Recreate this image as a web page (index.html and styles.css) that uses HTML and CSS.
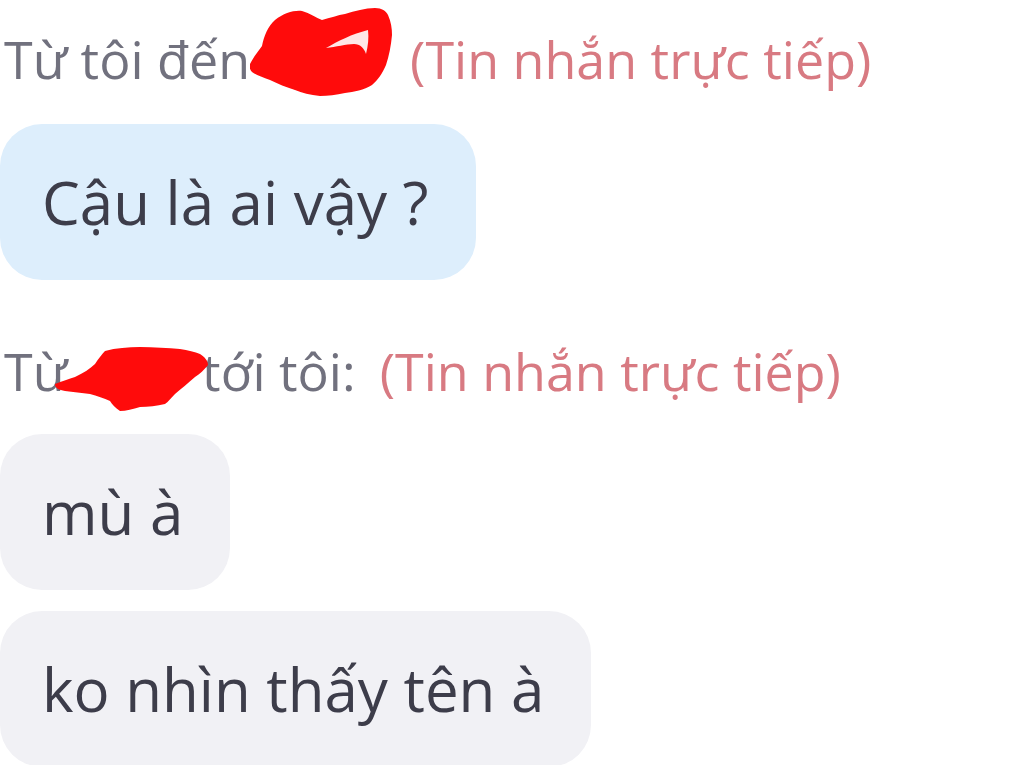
FILE: index.html
```html
<!DOCTYPE html>
<html lang="vi">
<head>
    <meta charset="UTF-8">
    <meta name="viewport" content="width=device-width, initial-scale=1.0">
    <title>Chat</title>
    <link rel="stylesheet" href="styles.css">
</head>
<body>
    <div class="chat">
        <div class="meta">
            <span class="from">Từ tôi đến</span>
            <span class="redact redact-one">
                <svg viewBox="0 0 144 90" width="144" height="90">
                    <path d="M0 56 C4 48 8 44 12 38 C14 28 18 18 25 12 C34 5 44 2 52 3 C60 5 66 10 72 12 C80 10 88 7 95 6 C105 3 115 0 125 0 C132 0 136 3 138 7 C141 14 142 20 142 27 C141 38 139 48 136 57 C132 66 128 72 122 77 C114 82 104 84 95 85 C86 87 78 88 70 88 C60 87 52 85 45 82 C36 79 28 76 20 72 C12 69 6 67 2 64 C0 62 -1 59 0 56 Z" fill="#ff0b0b"/>
                    <path d="M76 40 C88 33 102 26 118 22 C119 30 118 38 116 46 C114 40 110 36 104 36 C96 36 86 39 76 40 Z" fill="#ffffff" opacity="0.9"/>
                </svg>
            </span>
            <span class="dm">(Tin nhắn trực tiếp)</span>
        </div>
        <div class="bubble mine">Cậu là ai vậy ?</div>

        <div class="meta">
            <span class="from">Từ</span>
            <span class="redact redact-two">
                <svg viewBox="0 0 156 68" width="156" height="68">
                    <path d="M1 39 C8 36 15 34 21 32 C29 28 36 24 41 19 C45 13 48 9 51 6 C62 3 74 2 86 2 C100 2 114 3 126 4 C134 5 141 7 146 9 C151 12 154 16 154 20 C150 25 146 29 141 32 C134 38 127 44 121 49 C117 53 114 57 111 59 C103 61 94 62 86 62 C79 64 72 66 66 66 C61 63 58 59 56 56 C50 53 43 51 36 49 C28 48 19 47 11 46 C5 45 1 43 1 39 Z" fill="#ff0b0b"/>
                </svg>
            </span>
            <span class="from">tới tôi:</span>
            <span class="dm dm-spaced">(Tin nhắn trực tiếp)</span>
        </div>
        <div class="bubble">mù à</div>
        <div class="bubble">ko nhìn thấy tên à</div>
    </div>
</body>
</html>
```

FILE: styles.css
```css
* {
    margin: 0;
    padding: 0;
    box-sizing: border-box;
}

body {
    font-family: 'Open Sans', 'Noto Sans', 'DejaVu Sans', sans-serif;
    background: #ffffff;
    color: #3d3d4a;
    overflow: hidden;
}

.chat {
    display: flex;
    flex-direction: column;
    align-items: flex-start;
    padding-top: 27px;
}

.meta {
    display: flex;
    align-items: center;
    font-size: 52px;
    line-height: 64px;
    color: #71717e;
    padding-left: 4px;
    white-space: nowrap;
}

.meta .dm {
    color: #d87a82;
    margin-left: 16px;
}

.meta .dm-spaced {
    margin-left: 24px;
}

.redact {
    position: relative;
    display: inline-block;
    height: 64px;
}

.redact svg {
    position: absolute;
}

.redact-one {
    width: 144px;
}

.redact-one svg {
    left: 0;
    top: -19px;
}

.redact-two {
    width: 135px;
}

.redact-two svg {
    left: -13px;
    top: 6px;
}

.bubble {
    background: #f1f1f5;
    border-radius: 42px;
    font-size: 60px;
    line-height: 60px;
    padding: 48px 47px 48px 42px;
    margin-bottom: 21px;
    color: #3d3d4a;
}

.bubble.mine {
    background: #ddeefc;
    margin-bottom: 59px;
}

.meta + .bubble {
    margin-top: 31px;
}

.meta + .bubble.mine {
    margin-top: 33px;
}

.bubble + .bubble {
    margin-top: 0;
}
```
